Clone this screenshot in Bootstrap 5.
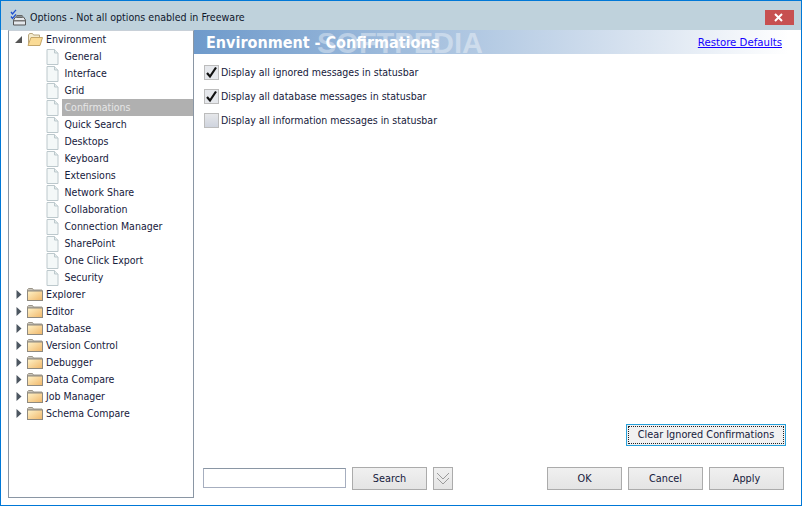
<!DOCTYPE html>
<html lang="en"><head><meta charset="utf-8"><title>Options</title>
<link href="https://cdn.jsdelivr.net/npm/bootstrap@5.3.0/dist/css/bootstrap.min.css" rel="stylesheet">
<style>
html,body{height:100%;margin:0}
body{font:10.5px/17px "DejaVu Sans Condensed","Roboto",sans-serif;color:#16203c;background:#fff;overflow:hidden}
.win{width:802px;height:506px;border:1px solid #0078d7;background:#fff}
.titlebar{height:29px;background:#bfd2dc;color:#10182c;padding:8px 7px 0 9px;font-size:10.6px;flex:none}
.titlebar svg{margin-right:3px}
.closex{width:29px;height:15px;background:#c75050;display:flex;align-items:center;justify-content:center;margin-top:1px}
.body-area{flex:1;min-height:0}
.treebox{width:186px;margin:0 0 7px 7px;border:1px solid #8a96a4;border-top-color:#c8d0d8;flex:none}
.treerow{height:17px;white-space:nowrap}
.arrow{width:18px;display:flex;justify-content:center;padding-left:1px;flex:none}
.fold{width:16px;margin-right:3px;flex:none}
.leaf{margin-left:37px;width:13px;flex:none;margin-right:3px}
.lbl{padding:0 2.5px;flex:1;height:17px;line-height:17px}
.cur{background:#b0b0b0;color:#e6e6e6}
.mainp{min-width:0}
.bandx{height:24px;background:linear-gradient(90deg,#6e9acb 0%,#a8c2df 40%,#dbe5f1 75%,#fff 98%);position:relative;padding:0 19px 0 12px}
.bandtitle{font:bold 16px/24px "DejaVu Sans Condensed","DejaVu Sans",sans-serif;color:#fff;padding-top:1px}
.wmark{position:absolute;left:123px;top:1px;font:bold 29px/24px "Liberation Sans",sans-serif;color:rgba(255,255,255,.38)}
.restore{color:#1400ff;text-decoration:underline;font-size:11.3px;padding-top:1px}
.chk-wrap{padding:6px 0 0 10px}
.chk-line{height:24px;display:flex;align-items:center;margin:0;padding:0}
.form-check-input.boxy{width:15px;height:15px;margin:0 2px 0 0;border:1px solid #bcbcbc;border-radius:0;background-color:#dcdfe6;background-image:linear-gradient(#e6e7ea,#cfd4de);float:none;opacity:1}
.form-check-input.boxy:checked{background-color:#e6e8ec;border-color:#bcbcbc;background-size:13px;background-image:url("data:image/svg+xml,%3Csvg xmlns='http://www.w3.org/2000/svg' viewBox='0 0 13 13'%3E%3Cpath d='M2 7l3 3.500L11 1.500' fill='none' stroke='%23111' stroke-width='2.200'/%3E%3C/svg%3E")}
.btn.flatb{--bs-btn-border-radius:0;height:23px;padding:0;font-size:10.8px;line-height:21px;color:#16203c;border:1px solid #ababab;background:linear-gradient(#f0f0f0,#e4e4e4);width:75px;flex:none}
.btn.clearb{width:160px;background:#f1f1f1;border:1px solid #26a0da;position:relative;height:22px;line-height:20px}
.clearb::after{content:"";position:absolute;inset:1px;border:1px dotted #222}
.btn.chev{width:20px;display:flex;align-items:center;justify-content:center;margin-left:6px}
.searchbox{width:143px;height:20px;border:1px solid #a6aebf;border-top-color:#8a96a4;border-radius:0;padding:0 3px;font-size:11px;flex:none;margin:1px 6px 0 0;min-height:0}
.clearrow{padding-right:15px;margin-bottom:21px}
.bottomrow{padding:0 0 15px 9px}
.actions{margin-left:auto;padding-right:17px}
.actions .btn+.btn{margin-left:6px}
</style></head>
<body>
<div class="win d-flex flex-column">
 <div class="titlebar d-flex align-items-start">
  <svg width="17" height="17" viewBox="0 0 17 17"><path d="M1 3l1.500 2L6 .8M1 7.500L2.500 9.500 6 5.300" fill="none" stroke="#1f4fd0" stroke-width="1.300"/><path d="M3.500 11l2-3h8l2 3v5h-12z" fill="#e4e8ec" stroke="#555"/><rect x="3.500" y="11" width="12" height="1.500" fill="#777"/><rect x="7" y="6.500" width="5" height="2" fill="none" stroke="#666"/></svg>
  <span>Options - Not all options enabled in Freeware</span>
  <div class="closex ms-auto"><svg width="9" height="9" viewBox="0 0 9 9"><path d="M1 1l7 7M8 1l-7 7" stroke="#fff" stroke-width="2"/></svg></div>
 </div>
 <div class="body-area d-flex">
  <div class="treebox">
   <ul class="list-unstyled m-0" id="treelist"></ul>
  </div>
  <div class="mainp flex-grow-1 d-flex flex-column">
   <div class="bandx d-flex align-items-center justify-content-between">
    <span class="bandtitle">Environment - Confirmations</span>
    <span class="wmark">SOFTPEDIA</span>
    <a class="restore" href="#">Restore Defaults</a>
   </div>
   <div class="chk-wrap flex-grow-1">
    <label class="chk-line"><input class="form-check-input boxy" type="checkbox" checked>Display all ignored messages in statusbar</label>
    <label class="chk-line"><input class="form-check-input boxy" type="checkbox" checked>Display all database messages in statusbar</label>
    <label class="chk-line"><input class="form-check-input boxy" type="checkbox">Display all information messages in statusbar</label>
   </div>
   <div class="clearrow d-flex justify-content-end"><button class="btn flatb clearb" type="button">Clear Ignored Confirmations</button></div>
   <div class="bottomrow d-flex">
    <input class="form-control searchbox" type="text">
    <button class="btn flatb" type="button">Search</button>
    <button class="btn flatb chev" type="button"><svg width="14" height="15" viewBox="0 0 14 15"><path d="M1 2l6 6 6-6M1 7l6 6 6-6" fill="none" stroke="#9a9a9a"/></svg></button>
    <div class="actions d-flex">
     <button class="btn flatb" type="button">OK</button>
     <button class="btn flatb" type="button">Cancel</button>
     <button class="btn flatb" type="button">Apply</button>
    </div>
   </div>
  </div>
 </div>
</div>
<script>
const fOpen='<svg class="fold" width="16" height="13" viewBox="0 0 16 13"><path d="M1.500 12V2l1-1.500h3l1 1.500h6v2" fill="#f5ecd0" stroke="#b8a67e"/><path d="M1 12.500l3-8h11.500L13 12.500z" fill="#fadb96" stroke="#c4a66a"/></svg>';
const fClosed='<svg class="fold" width="16" height="13" viewBox="0 0 16 13"><defs><linearGradient id="g" x1="0" y1="0" x2="1" y2="1"><stop offset="0" stop-color="#fff3c9"/><stop offset="1" stop-color="#f0b668"/></linearGradient></defs><path d="M.5 3V1.500l1-1h4l1 1.500h8.500v1z" fill="#c9c5bb" stroke="#9c968a"/><rect x=".5" y="3" width="15" height="9.500" fill="url(#g)" stroke="#8f8a80"/></svg>';
const file='<svg class="leaf" width="13" height="16" viewBox="0 0 13 16"><path d="M1 .5h7.500l3.500 3.500v11.500H1z" fill="#f4f8f8" stroke="#bcc8cc"/><path d="M8.500.5V4H12" fill="#e4ecec" stroke="#bcc8cc"/></svg>';
const down='<svg width="7" height="7" viewBox="0 0 7 7"><path d="M7 0v7H0z" fill="#555"/></svg>';
const right='<svg width="6" height="9" viewBox="0 0 6 9"><path d="M.5 0L5.500 4.500.5 9z" fill="#4c5660"/></svg>';
const kids=["General","Interface","Grid","Confirmations","Quick Search","Desktops","Keyboard","Extensions","Network Share","Collaboration","Connection Manager","SharePoint","One Click Export","Security"];
const tops=["Explorer","Editor","Database","Version Control","Debugger","Data Compare","Job Manager","Schema Compare"];
let h='<li class="treerow d-flex align-items-center"><span class="arrow">'+down+'</span>'+fOpen+'<span>Environment</span></li>';
kids.forEach(k=>{h+='<li class="treerow d-flex align-items-center">'+file+'<span class="lbl'+(k==="Confirmations"?' cur':'')+'">'+k+'</span></li>'});
tops.forEach(k=>{h+='<li class="treerow d-flex align-items-center"><span class="arrow">'+right+'</span>'+fClosed+'<span>'+k+'</span></li>'});
document.getElementById('treelist').innerHTML=h;
</script>
<script src="https://cdn.jsdelivr.net/npm/bootstrap@5.3.0/dist/js/bootstrap.bundle.min.js"></script>
</body></html>
